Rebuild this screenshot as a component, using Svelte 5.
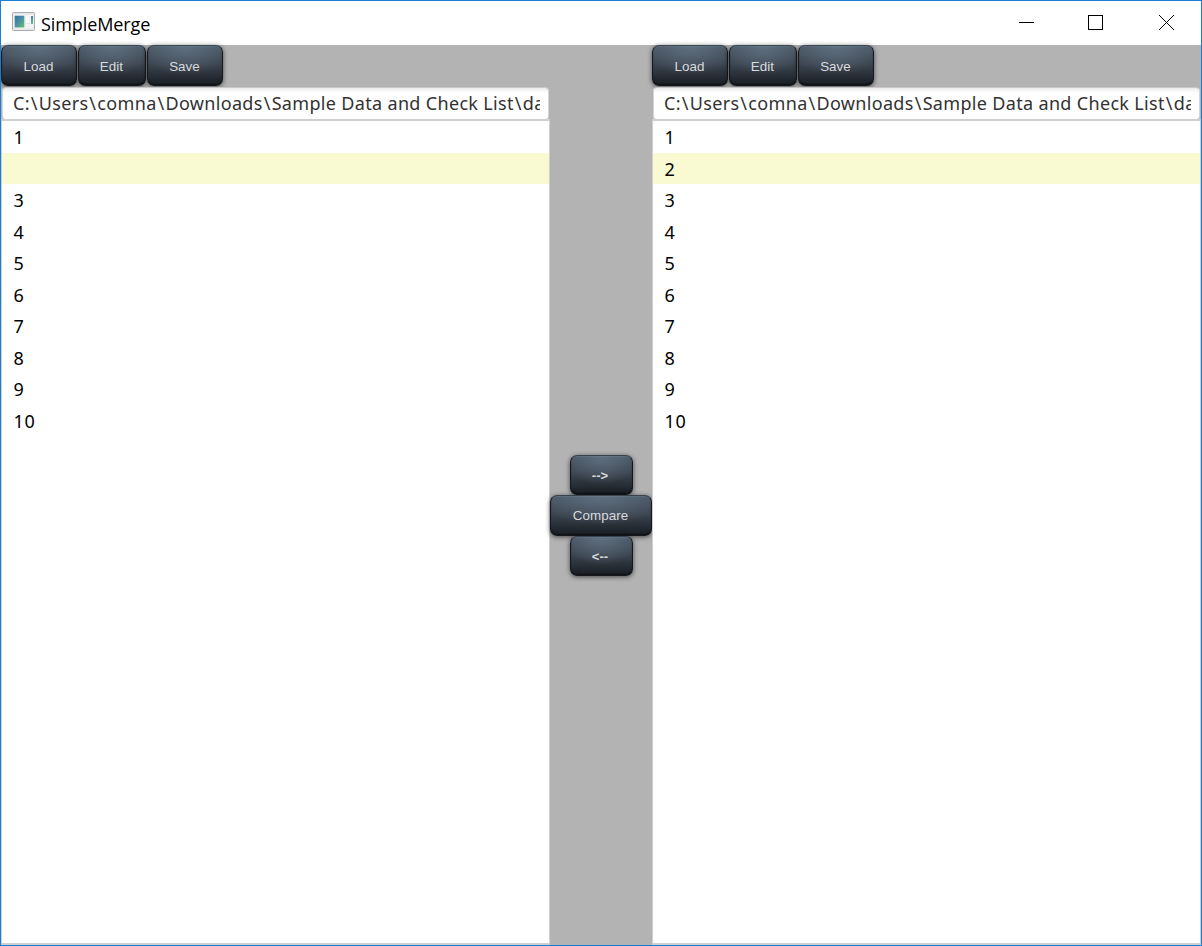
<script>
  const segments = ['C:', 'Users', 'comna', 'Downloads', 'Sample Data and Check List', 'da'];
  const panes = [
    { id: 'left', lines: ['1', '', '3', '4', '5', '6', '7', '8', '9', '10'] },
    { id: 'right', lines: ['1', '2', '3', '4', '5', '6', '7', '8', '9', '10'] }
  ];
  const changed = 1;
</script>

{#snippet pane(p)}
  <section class="pane">
    <div class="toolbar">
      <button class="load">Load</button>
      <button class="edit">Edit</button>
      <button class="save">Save</button>
    </div>
    <div class="field">
      <div class="path">{#each segments as segment, i}{#if i > 0}<span class="slash">\</span>{/if}{segment}{/each}</div>
    </div>
    <div class="list">
      {#each p.lines as line, i}
        <div class="row" class:changed={i === changed}>{line}</div>
      {/each}
    </div>
  </section>
{/snippet}

<div class="window">
  <header>
    <svg class="logo" width="24" height="20" viewBox="0 0 24 20">
      <defs>
        <linearGradient id="screen" x1="0" y1="0" x2="1" y2="1">
          <stop offset="0" stop-color="#356ba8" />
          <stop offset="0.5" stop-color="#4b93a0" />
          <stop offset="1" stop-color="#66bf78" />
        </linearGradient>
        <linearGradient id="bar" x1="0" y1="0" x2="0" y2="1">
          <stop offset="0" stop-color="#4279a6" />
          <stop offset="1" stop-color="#66bf88" />
        </linearGradient>
      </defs>
      <rect x="0.5" y="0.5" width="22" height="18" rx="1" fill="#e4e6e8" stroke="#a9adb0" />
      <rect x="1.5" y="2.5" width="12" height="14" fill="#f5f5f5" />
      <rect x="2.7" y="3.7" width="9.6" height="11.8" fill="url(#screen)" />
      <rect x="14" y="3" width="3.5" height="8" fill="#fafafa" />
      <rect x="18" y="3" width="3.5" height="9.5" fill="#fafafa" />
      <rect x="19" y="4" width="2" height="8" fill="url(#bar)" />
      <rect x="14" y="12" width="7.5" height="4.5" fill="#f3f3f3" />
    </svg>
    <span class="title">SimpleMerge</span>
    <svg class="controls" width="170" height="20" viewBox="0 0 170 20" fill="none" stroke="#000" stroke-width="1">
      <path d="M1 10.5H16" />
      <rect x="70.5" y="3.5" width="14" height="14" />
      <path d="M141 3L156 18M156 3L141 18" />
    </svg>
  </header>
  <main>
    {@render pane(panes[0])}
    <nav>
      <button class="arrow">--&gt;</button>
      <button class="compare">Compare</button>
      <button class="arrow">&lt;--</button>
    </nav>
    {@render pane(panes[1])}
  </main>
</div>

<style>
  .window {
    box-sizing: border-box;
    width: 1202px;
    height: 946px;
    border: 1px solid #1a7fd4;
    background: #b3b3b3;
    display: flex;
    flex-direction: column;
    overflow: hidden;
  }
  header {
    flex: 0 0 44px;
    background: #fff;
    display: flex;
    align-items: flex-start;
  }
  .logo {
    margin: 11px 0 0 11px;
  }
  .title {
    margin: 9px 0 0 5px;
    font: 18px/28px "Open Sans", sans-serif;
    letter-spacing: -0.1px;
    color: #000;
    flex: 1;
  }
  .controls {
    margin: 11px 13px 0 0;
  }
  main {
    flex: 1;
    display: grid;
    grid-template-columns: 549px 102px 549px;
    min-height: 0;
  }
  .pane {
    display: flex;
    flex-direction: column;
    min-width: 0;
  }
  .toolbar {
    display: flex;
    height: 41px;
    flex: none;
    gap: 1px;
  }
  button {
    box-sizing: border-box;
    height: 40.5px;
    padding: 1px 0 0;
    border: 1px solid #15191e;
    border-top-color: #38434d;
    border-radius: 7px;
    background:
      radial-gradient(ellipse 65% 75% at 50% 0, rgba(108, 126, 144, 0.65), rgba(100, 120, 138, 0)),
      linear-gradient(#495663, #3c4550 45%, #191d23);
    box-shadow: 0 1px 5px rgba(0, 0, 0, 0.6), inset 0 1px 1px rgba(120, 142, 160, 0.3), inset 0 -1px 1px #101316;
    color: #d8dade;
    font: 13.4px/38px "Liberation Sans", sans-serif;
    letter-spacing: 0.05px;
  }
  .toolbar button {
    height: 40.5px;
    padding: 1px 1px 0 0;
    line-height: 39px;
  }
  .load, .save {
    width: 76px;
  }
  .edit {
    width: 68px;
  }
  .field {
    box-sizing: border-box;
    flex: none;
    height: 33px;
    margin: 1px 1px 0 1px;
    padding: 0 8px 0 10px;
    border: 1px solid #d4d4d4;
    border-top-color: #c8c8c8;
    border-radius: 4px;
    background: linear-gradient(#ebebeb, #fff 5px);
  }
  .path {
    overflow: hidden;
    white-space: nowrap;
    font: 18px/30px "Noto Sans", sans-serif;
    letter-spacing: 0.33px;
    color: #323232;
  }
  .slash {
    margin: 0 0.95px;
  }
  .list {
    flex: 1;
    margin-top: -1px;
    border: 1px solid #cfcfcf;
    border-top-width: 2px;
    border-bottom-width: 2px;
    background: #fff;
  }
  .row {
    box-sizing: border-box;
    height: 31.5px;
    padding-left: 11.5px;
    font: 18px/32.4px "Noto Sans", sans-serif;
    letter-spacing: 0.7px;
    color: #000;
  }
  .changed {
    background: #f9f9d2;
  }
  nav {
    display: flex;
    flex-direction: column;
    align-items: center;
    padding-top: 409.5px;
  }
  .arrow {
    width: 63px;
    font-size: 13px;
    font-weight: bold;
    padding-right: 2px;
  }
  .compare {
    width: 102px;
    padding-right: 1px;
  }
</style>
